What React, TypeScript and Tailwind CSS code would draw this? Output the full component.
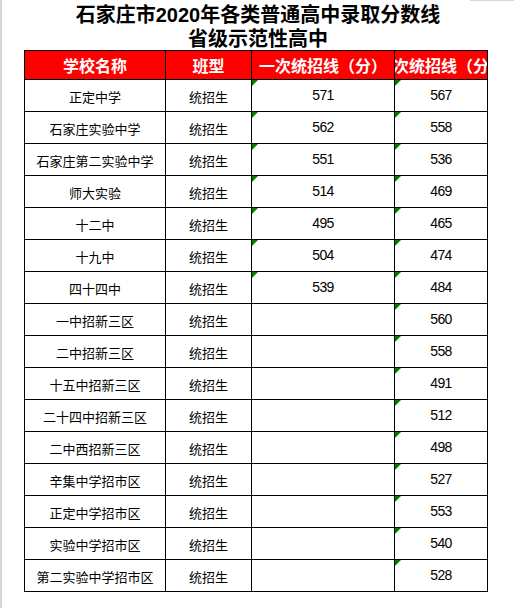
import React from "react";

type Row = {
  name: string;
  first?: string;
  second: string;
};

const rows: Row[] = [
  { name: "正定中学", first: "571", second: "567" },
  { name: "石家庄实验中学", first: "562", second: "558" },
  { name: "石家庄第二实验中学", first: "551", second: "536" },
  { name: "师大实验", first: "514", second: "469" },
  { name: "十二中", first: "495", second: "465" },
  { name: "十九中", first: "504", second: "474" },
  { name: "四十四中", first: "539", second: "484" },
  { name: "一中招新三区", second: "560" },
  { name: "二中招新三区", second: "558" },
  { name: "十五中招新三区", second: "491" },
  { name: "二十四中招新三区", second: "512" },
  { name: "二中西招新三区", second: "498" },
  { name: "辛集中学招市区", second: "527" },
  { name: "正定中学招市区", second: "553" },
  { name: "实验中学招市区", second: "540" },
  { name: "第二实验中学招市区", second: "528" },
];

// little green "number stored as text" marker in the cell corner
function Marker() {
  return (
    <svg className="absolute left-0 top-0" width="6" height="6" viewBox="0 0 6 6">
      <polygon points="0,0 6,0 0,6" fill="#008000" />
    </svg>
  );
}

function HeadCell({ w, children }: { w: string; children: React.ReactNode }) {
  return (
    <div className={`${w} flex h-full items-center justify-center overflow-hidden whitespace-nowrap border-r border-black`}>
      {children}
    </div>
  );
}

export default function App() {
  return (
    <div className="relative h-[608px] w-[514px] overflow-hidden border-l-2 border-[#d6d6d6] bg-white">
      <div className="flex h-px">
        <div className="flex-1" />
        <div className="w-[44px] bg-[#d6d6d6]" />
      </div>

      <div className="h-[49px] pt-[2px] text-center font-['Liberation_Sans','Noto_Sans_CJK_SC',sans-serif] text-[20px] font-bold leading-[24px] text-black">
        <div>石家庄市2020年各类普通高中录取分数线</div>
        <div>省级示范性高中</div>
      </div>

      <div className="ml-[22px] w-[464px] border-l border-t border-black">
        <div className="flex h-[29px] border-b border-black bg-[#ff0000] font-['Noto_Sans_CJK_SC',sans-serif] text-[16px] font-bold text-white">
          <HeadCell w="w-[141px]">学校名称</HeadCell>
          <HeadCell w="w-[86px]">班型</HeadCell>
          <HeadCell w="w-[143px]">一次统招线（分）</HeadCell>
          <HeadCell w="w-[93px]">二次统招线（分）</HeadCell>
        </div>

        {rows.map((r) => (
          <div key={r.name} className="flex h-8 border-b border-black text-black">
            <div className="flex w-[141px] items-center justify-center border-r border-black pt-[3px] font-['Noto_Sans_CJK_SC',sans-serif] text-[13px]">
              {r.name}
            </div>
            <div className="flex w-[86px] items-center justify-center border-r border-black pt-[3px] font-['Noto_Sans_CJK_SC',sans-serif] text-[13px]">
              统招生
            </div>
            <div className="relative flex w-[143px] items-center justify-center border-r border-black font-['Liberation_Sans',sans-serif] text-[14px] tracking-[-0.6px]">
              {r.first && <Marker />}
              {r.first}
            </div>
            <div className="relative flex w-[93px] items-center justify-center border-r border-black font-['Liberation_Sans',sans-serif] text-[14px] tracking-[-0.6px]">
              <Marker />
              {r.second}
            </div>
          </div>
        ))}
      </div>
    </div>
  );
}
